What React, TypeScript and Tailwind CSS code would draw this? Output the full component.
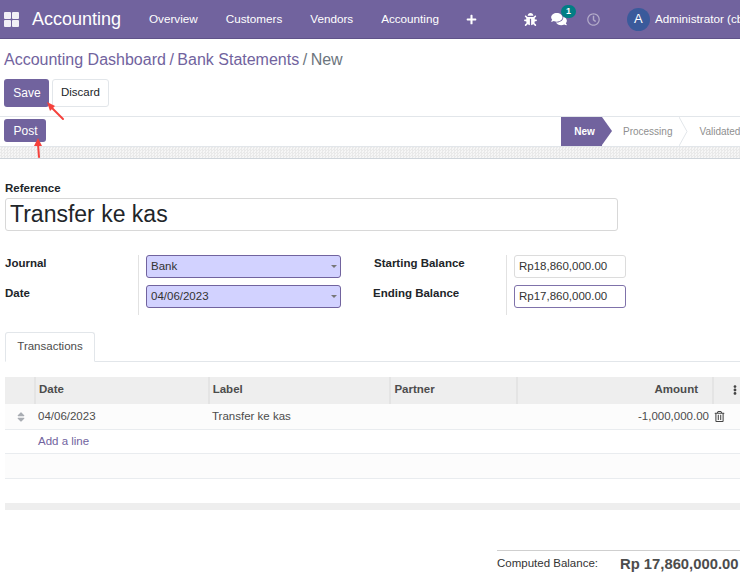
import { FaBug, FaComments, FaEllipsisV, FaPlus, FaRegClock, FaRegTrashAlt, FaSort } from "react-icons/fa";

const navItems = ["Overview", "Customers", "Vendors", "Accounting"];

function Arrow({ className, line, head }: { className: string; line: string; head: string }) {
  return (
    <svg className={className} viewBox="0 0 24 24" fill="none">
      <path d={line} stroke="#f5413c" strokeWidth="2" strokeLinecap="round" />
      <path d={head} fill="#f5413c" />
    </svg>
  );
}

function Navbar() {
  return (
    <header className="flex h-[39px] items-center overflow-hidden whitespace-nowrap border-b border-[#5f5289] bg-[#71639e] text-white">
      <svg className="ml-[4px] h-[15px] w-[15px] shrink-0" viewBox="0 0 15 15" fill="#f1eff6">
        <rect x="0" y="0" width="7" height="7" rx="1" />
        <rect x="8" y="0" width="7" height="7" rx="1" />
        <rect x="0" y="8" width="7" height="7" rx="1" />
        <rect x="8" y="8" width="7" height="7" rx="1" />
      </svg>
      <span className="ml-[13px] w-[117px] shrink-0 text-[18px]">Accounting</span>
      <nav className="flex shrink-0 gap-[28px] text-[11.7px]">
        {navItems.map((item) => (
          <span key={item}>{item}</span>
        ))}
      </nav>
      <FaPlus className="ml-[27px] h-[11px] w-[11px] shrink-0" />
      <FaBug className="ml-[47px] h-[13px] w-[13px] shrink-0" />
      <div className="relative ml-[14px] h-[14px] w-[16px] shrink-0">
        <FaComments className="h-[14px] w-[16px]" />
        <span className="absolute left-[10px] top-[-7px] flex h-[13px] w-[15px] items-center justify-center rounded-full bg-[#017e84] text-[9px] font-bold">
          1
        </span>
      </div>
      <FaRegClock className="ml-[20px] h-[13px] w-[13px] shrink-0 text-[#b3abc9]" />
      <span className="ml-[27px] flex h-[23px] w-[23px] shrink-0 items-center justify-center rounded-full bg-[#3a5a9b] text-[13px]">
        A
      </span>
      <span className="ml-[5px] shrink-0 text-[11.7px]">Administrator (cbi)</span>
    </header>
  );
}

function Statusbar() {
  return (
    <div className="flex h-[31px] items-stretch justify-between overflow-hidden whitespace-nowrap border-y border-[#e2e6ea] bg-white">
      <button className="ml-[4px] mt-[2px] h-[23px] w-[42px] rounded-[3px] bg-[#71639e] pl-px text-[12px] font-medium text-white">
        Post
      </button>
      <div className="flex w-[179px] shrink-0 items-center text-[10px] text-[#8f8f8f]">
        <div className="relative flex h-[29px] w-[41px] shrink-0 items-center justify-center bg-[#71639e] pl-[6px] font-bold text-white">
          New
          <span className="absolute left-[41px] top-0 h-0 w-0 border-y-[14.5px] border-l-[10px] border-y-transparent border-l-[#71639e]" />
        </div>
        <span className="ml-[21px] w-[51px]">Processing</span>
        <svg className="ml-[7px] h-[29px] w-[9px] shrink-0" viewBox="0 0 9 29" fill="none">
          <path d="M0 0l8 14.5L0 29" stroke="#e2e6ea" />
        </svg>
        <span className="ml-[11px]">Validated</span>
      </div>
    </div>
  );
}

function FieldLabel({ children, className = "" }: { children: string; className?: string }) {
  return <div className={`text-[11.5px] font-bold leading-[16px] text-[#212529] ${className}`}>{children}</div>;
}

function SelectBox({ value }: { value: string }) {
  return (
    <div className="flex h-[23px] w-[195px] items-center justify-between rounded-[3px] border border-[#71639e] bg-[#d2d2ff] pl-[4px] pr-[3px] text-[11.5px] text-[#333]">
      {value}
      <span className="h-0 w-0 border-x-[3px] border-t-[3px] border-x-transparent border-t-[#777]" />
    </div>
  );
}

function Transactions() {
  return (
    <div className="ml-[5px] text-[11.5px] text-[#4c4c4c]">
      <div className="flex h-[27px] items-center bg-[#eeeeee] font-bold text-[#4c4c4c]">
        <div className="h-full w-[31px] border-r-2 border-[#e4e4e4]" />
        <div className="flex h-full w-[174px] items-center border-r-2 border-[#e4e4e4] pb-[2px] pl-[3px]">Date</div>
        <div className="flex h-full w-[182px] items-center border-r-2 border-[#e4e4e4] pb-[2px] pl-[3px]">Label</div>
        <div className="flex h-full w-[127px] items-center border-r-2 border-[#e4e4e4] pb-[2px] pl-[3px]">Partner</div>
        <div className="flex h-full w-[196px] items-center justify-end border-r-2 border-[#e4e4e4] pb-[2px] pr-[14px]">Amount</div>
        <div className="flex h-full flex-1 items-center pb-[2px] pl-[16px]">
          <FaEllipsisV className="h-[10px] w-[10px] text-[#444]" />
        </div>
      </div>
      <div className="flex h-[26px] items-center border-b border-[#e9ecef] bg-[#fcfcfc]">
        <div className="flex w-[33px] justify-center pr-[2px]">
          <FaSort className="h-[12px] w-[12px] text-[#a9adb3]" />
        </div>
        <div className="w-[174px]">04/06/2023</div>
        <div className="w-[200px]">Transfer ke kas</div>
        <div className="w-[297px] text-right">-1,000,000.00</div>
        <FaRegTrashAlt className="ml-[5px] h-[11px] w-[11px] text-[#444]" />
      </div>
      <div className="flex h-[24px] items-center border-b border-[#e9ecef] pl-[33px] text-[#71639e]">Add a line</div>
      <div className="h-[25px] border-b border-[#e9ecef] bg-[#fcfcfc]" />
      <div className="h-[24px]" />
      <div className="h-[7px] bg-[#eeeeee]" />
    </div>
  );
}

export default function App() {
  return (
    <div
      className="relative h-[575px] w-[740px] overflow-hidden bg-white"
      style={{ fontFamily: '"Liberation Sans", Arial, sans-serif' }}
    >
      <Navbar />
      <div className="h-[77px] bg-white px-[4px] pt-[10px]">
        <div className="text-[16px] leading-[21px] text-[#71639e]">
          Accounting Dashboard<span className="mx-[3.5px]">/</span>Bank Statements
          <span className="mx-[3.5px] text-[#6c757d]">/</span>
          <span className="text-[#6c757d]">New</span>
        </div>
        <div className="mt-[9px] flex gap-[3px] text-[12px]">
          <button className="h-[28px] w-[45px] rounded-[3px] bg-[#71639e] pl-px font-medium text-white">Save</button>
          <button className="h-[28px] w-[57px] rounded-[3px] border border-[#e2e6ea] bg-white text-[11.5px] text-[#212529]">Discard</button>
        </div>
      </div>
      <Statusbar />
      <div className="h-[12px] border-b border-[#ced4da] bg-[repeating-conic-gradient(#e9e9e9_0_25%,#f6f6f6_0_50%)] bg-[length:3px_3px]" />

      <div className="pl-[5px] pt-[21px]">
        <FieldLabel>Reference</FieldLabel>
        <div className="mt-[2px] flex h-[33px] w-[613px] items-center rounded-[3px] border border-[#d8d8d8] pl-[4px] text-[23px] text-[#212529]">
          Transfer ke kas
        </div>
        <div className="mt-[24px] flex h-[60px]">
          <div className="flex w-[133px] flex-col gap-[14px]">
            <FieldLabel>Journal</FieldLabel>
            <FieldLabel>Date</FieldLabel>
          </div>
          <div className="flex w-[235px] flex-col gap-[7px] border-l border-[#e2e2e2] pl-[7px]">
            <SelectBox value="Bank" />
            <SelectBox value="04/06/2023" />
          </div>
          <div className="flex w-[133px] flex-col gap-[14px]">
            <FieldLabel className="pl-px">Starting Balance</FieldLabel>
            <FieldLabel>Ending Balance</FieldLabel>
          </div>
          <div className="flex flex-col gap-[7px] border-l border-[#e2e2e2] pl-[7px] text-[11.5px] text-[#333]">
            <div className="flex h-[23px] w-[112px] items-center rounded-[3px] border border-[#dcdcdc] pl-[4px]">Rp18,860,000.00</div>
            <div className="flex h-[23px] w-[112px] items-center rounded-[3px] border border-[#7f72aa] pl-[4px]">Rp17,860,000.00</div>
          </div>
        </div>
        <div className="mt-[17px] h-[30px] border-b border-[#e2e6ea]">
          <div className="flex h-[30px] w-[90px] items-center justify-center rounded-t-[3px] border border-b-white border-[#e2e6ea] bg-white text-[11.5px] text-[#4c4c4c]">
            Transactions
          </div>
        </div>
      </div>

      <div className="mt-[15px]">
        <Transactions />
      </div>

      <div className="ml-[497px] mt-[40px] flex h-[25px] items-start whitespace-nowrap border-t border-[#cfcfcf] pt-[2px]">
        <span className="w-[123px] pt-[2px] text-[11.5px] text-[#333]">Computed Balance:</span>
        <span className="text-[14.8px] font-bold text-[#4c4c4c]">Rp 17,860,000.00</span>
      </div>

      <Arrow className="absolute left-[44px] top-[100px] h-[24px] w-[24px]" line="M6 6l13 13" head="M3 2l8 4-5 5z" />
      <Arrow className="absolute left-[26px] top-[135px] h-[24px] w-[24px]" line="M12 9l1 13" head="M12 3l4 8H8z" />
    </div>
  );
}
